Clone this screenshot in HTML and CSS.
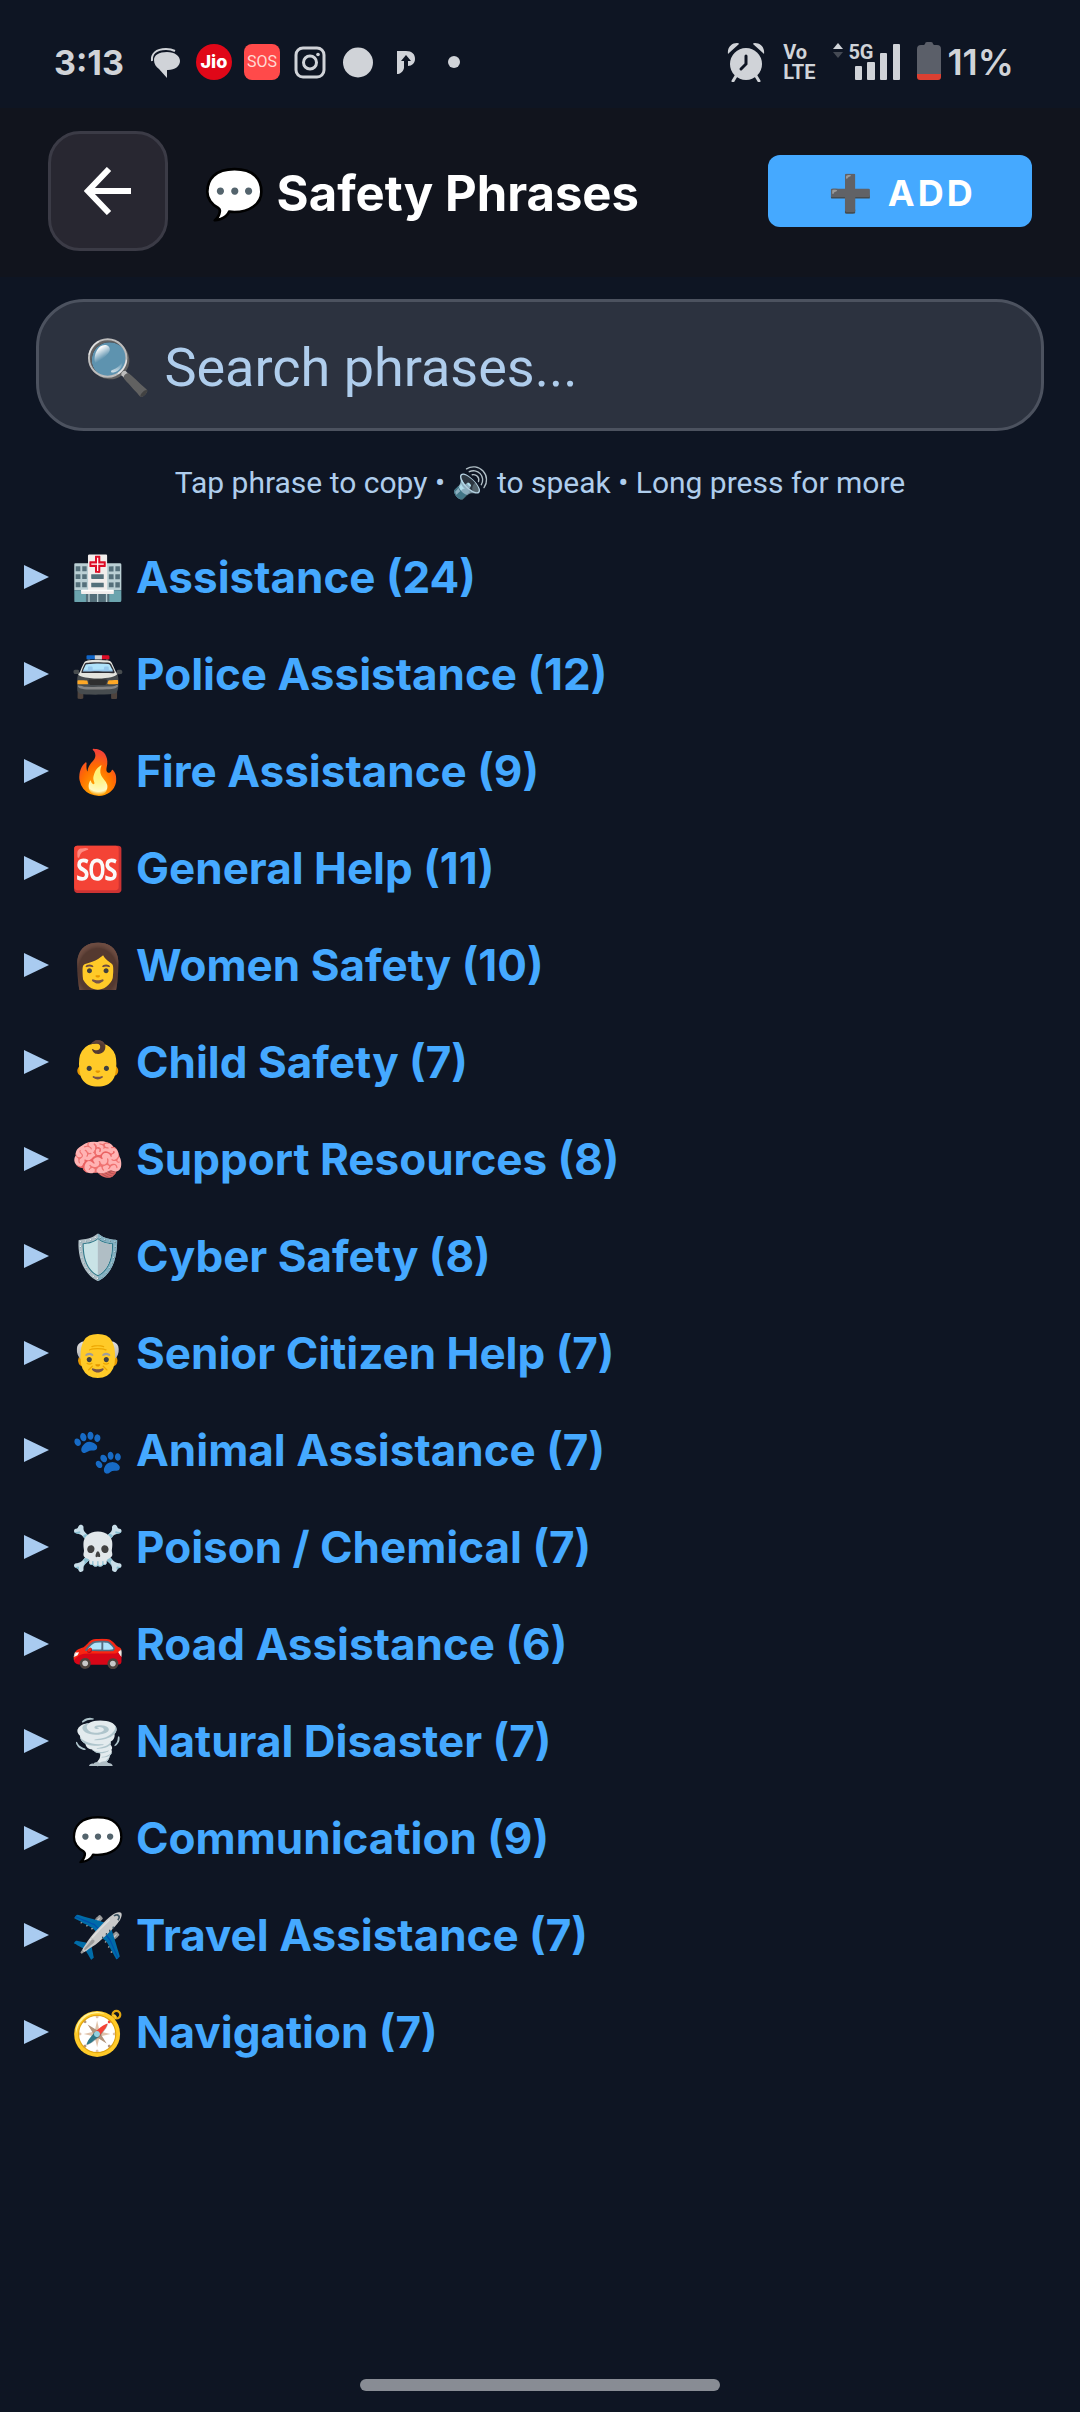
FILE: index.html
```html
<!DOCTYPE html>
<html lang="en">

<head>
    <meta charset="UTF-8">
    <meta name="viewport" content="width=device-width, initial-scale=1.0">
    <title>Safety Phrases</title>
    <link rel="stylesheet" href="styles.css">
</head>

<body>

    <div class="status-bar">
        <span class="time">3:13</span>
        <div class="notifications">
            <svg class="cell" viewBox="0 0 36 36" fill="#d0d3d8">
                <path d="M19 8c8 0 13 4 13 9s-5 9-12 9h-1v8L11 25c-3-2-5-5-5-9 0-5 5-8 13-8z" />
                <path d="M4 17C3 10 8 5 18 5c4 0 7 1 9 2" fill="none" stroke="#d0d3d8" stroke-width="2" />
            </svg>
            <span class="cell jio">Jio</span>
            <span class="cell sos">SOS</span>
            <svg class="cell" viewBox="0 0 36 36" fill="none" stroke="#d0d3d8" stroke-width="3">
                <rect x="4" y="4" width="28" height="29" rx="7" />
                <circle cx="18" cy="18.500" r="6.500" />
                <circle cx="26" cy="10.500" r="1.800" fill="#d0d3d8" stroke="none" />
            </svg>
            <svg class="cell" viewBox="0 0 36 36" fill="#d0d3d8">
                <circle cx="18" cy="18.500" r="15" />
            </svg>
            <svg class="cell" viewBox="0 0 36 36" fill="#d0d3d8">
                <path d="M9 7h9c6 0 9 3 9 8 0 4-3 7-7 7v-5h3l-5-6-5 6h3v7c-1 4-4 6-7 6z" />
            </svg>
            <svg class="cell" viewBox="0 0 36 36" fill="#d0d3d8">
                <circle cx="18" cy="18" r="6" />
            </svg>
        </div>
        <div class="system">
            <svg class="alarm" viewBox="0 0 38 40" fill="#d0d3d8">
                <circle cx="19" cy="22" r="16" />
                <path d="M1 12C0 5 5 1 10 1q2 0 2 1L2 11zM37 12c1-7-4-11-9-11q-2 0-2 1l10 9z" />
                <path d="M9 34l-3 5M29 34l3 5" stroke="#d0d3d8" stroke-width="3" stroke-linecap="round" />
                <path d="M19 14v8l-5 5" fill="none" stroke="#0e1523" stroke-width="3" stroke-linecap="round" />
            </svg>
            <div class="volte">
                <span>Vo</span>
                <span>LTE</span>
            </div>
            <div class="network">
                <svg class="signal" viewBox="0 0 68 40" fill="#d0d3d8">
                    <path d="M0 7l5-6 5 6z" />
                    <path d="M0 10h10l-5 6z" fill="#454a54" />
                    <rect x="22" y="24" width="7" height="14" rx="1" />
                    <rect x="34" y="20" width="8" height="18" rx="1" />
                    <rect x="47" y="11" width="7" height="27" rx="1" />
                    <rect x="60" y="2" width="7" height="36" rx="1" />
                </svg>
                <span class="network-type">5G</span>
            </div>
            <svg class="battery" viewBox="0 0 24 40">
                <path d="M8 2q0-2 2-2h4q2 0 2 2l1 1h3q4 0 4 4v27H0V7q0-4 4-4h3z" fill="#5b5f69" />
                <path d="M0 32h24v3q0 3-3 3H3q-3 0-3-3z" fill="#dc4032" />
            </svg>
            <span class="percent">11%</span>
        </div>
    </div>

    <header class="app-bar">
        <button class="back-button" type="button" aria-label="Back">
            <svg viewBox="0 0 48 48" fill="none" stroke="#ffffff" stroke-width="6">
                <path d="M47 24H5M25 2L4 24l21 22" />
            </svg>
        </button>
        <h1>💬 Safety Phrases</h1>
        <button class="add-button" type="button">➕ ADD</button>
    </header>

    <main>
        <input class="search" type="search" placeholder="🔍 Search phrases..." aria-label="Search phrases">
        <p class="hint">Tap phrase to copy • 🔊 to speak • Long press for more</p>

        <div class="categories">
            <details><summary><span class="emoji">🏥</span>Assistance (24)</summary></details>
            <details><summary><span class="emoji">🚔</span>Police Assistance (12)</summary></details>
            <details><summary><span class="emoji">🔥</span>Fire Assistance (9)</summary></details>
            <details><summary><span class="emoji">🆘</span>General Help (11)</summary></details>
            <details><summary><span class="emoji">👩</span>Women Safety (10)</summary></details>
            <details><summary><span class="emoji">👶</span>Child Safety (7)</summary></details>
            <details><summary><span class="emoji">🧠</span>Support Resources (8)</summary></details>
            <details><summary><span class="emoji">🛡️</span>Cyber Safety (8)</summary></details>
            <details><summary><span class="emoji">👴</span>Senior Citizen Help (7)</summary></details>
            <details><summary><span class="emoji">🐾</span>Animal Assistance (7)</summary></details>
            <details><summary><span class="emoji">☠️</span>Poison / Chemical (7)</summary></details>
            <details><summary><span class="emoji">🚗</span>Road Assistance (6)</summary></details>
            <details><summary><span class="emoji">🌪️</span>Natural Disaster (7)</summary></details>
            <details><summary><span class="emoji">💬</span>Communication (9)</summary></details>
            <details><summary><span class="emoji">✈️</span>Travel Assistance (7)</summary></details>
            <details><summary><span class="emoji">🧭</span>Navigation (7)</summary></details>
        </div>
    </main>

    <div class="home-indicator"></div>

</body>

</html>
```
FILE: styles.css
```css
* {
    box-sizing: border-box;
}

body {
    display: flex;
    flex-direction: column;
    min-height: 100vh;
    margin: 0;
    background: #0e1523;
    color: #ffffff;
    font-family: Inter, sans-serif;
}

/* Status bar */
.status-bar {
    display: flex;
    align-items: center;
    padding: 38px 66px 22px 54px;
    height: 108px;
    color: #d0d3d8;
    font-size: 36px;
    font-weight: 600;
}

.time {
    font-size: 34px;
    font-weight: 700;
}

.notifications {
    display: flex;
    gap: 12px;
    margin-left: 24px;
}

.cell {
    width: 36px;
    height: 36px;
    line-height: 36px;
    text-align: center;
}

.jio {
    border-radius: 50%;
    background: #e00718;
    color: #ffffff;
    font-size: 18px;
    font-weight: 800;
}

.sos {
    border-radius: 8px;
    background: #ff4a4a;
    color: #ffd9d2;
    font-family: Roboto, sans-serif;
    font-size: 16px;
    font-weight: 400;
}

.system {
    display: flex;
    align-items: center;
    margin-left: auto;
}

.alarm {
    width: 38px;
    height: 40px;
    margin-right: 18px;
}

.volte {
    display: flex;
    flex-direction: column;
    margin-right: 18px;
    font: 700 20px/20px Roboto, sans-serif;
}

.network {
    position: relative;
    height: 40px;
    margin-right: 16px;
}

.signal {
    display: block;
    width: 68px;
    height: 40px;
}

/* Sits over the empty corner left by the short signal bars */
.network-type {
    position: absolute;
    top: 0;
    left: 15px;
    font: 700 20px/20px Roboto, sans-serif;
}

.battery {
    width: 24px;
    height: 40px;
    margin-right: 6px;
}

/* App bar */
.app-bar {
    display: flex;
    align-items: center;
    padding: 23px 48px 26px;
    background: #11141d;
}

.back-button {
    display: flex;
    align-items: center;
    justify-content: center;
    width: 120px;
    height: 120px;
    border: 3px solid #3b3b46;
    border-radius: 32px;
    background: #282731;
}

.back-button svg {
    width: 48px;
    height: 48px;
}

h1 {
    margin: 0 0 0 36px;
    padding-top: 4px;
    font-size: 49px;
    font-weight: 700;
}

.add-button {
    width: 264px;
    height: 72px;
    margin-left: auto;
    padding: 4px 0 0 4px;
    border: none;
    border-radius: 12px;
    background: #45a9ff;
    color: #ffffff;
    font: 700 36px Inter, sans-serif;
    letter-spacing: 3px;
}

/* Search and hint */
main {
    flex: 1;
}

.search {
    display: block;
    width: calc(100% - 72px);
    height: 132px;
    margin: 22px 36px 32px;
    padding: 4px 45px 0;
    border: 3px solid #4c525f;
    border-radius: 48px;
    background: #2c323f;
    color: #ffffff;
    font: 400 54px Roboto, sans-serif;
}

.search::placeholder {
    color: #afcdec;
    opacity: 1;
}

.hint {
    margin: 0 0 26px;
    color: #afcdec;
    font: 400 30px/40px Roboto, sans-serif;
    text-align: center;
}

/* Category list */
summary {
    display: flex;
    align-items: center;
    height: 97px;
    padding: 0 24px 2px;
    color: #45a9ff;
    font-size: 44px;
    font-weight: 700;
    list-style: none;
    cursor: pointer;
}

summary::before {
    content: "";
    margin-right: 22px;
    border-top: 12px solid transparent;
    border-bottom: 12px solid transparent;
    border-left: 25px solid #a9cbf0;
}

details[open] summary::before {
    transform: rotate(90deg);
}

.emoji {
    width: 65px;
    font-size: 43px;
}

.home-indicator {
    width: 360px;
    height: 12px;
    margin: 0 auto 21px;
    border-radius: 6px;
    background: #888c94;
}
```
